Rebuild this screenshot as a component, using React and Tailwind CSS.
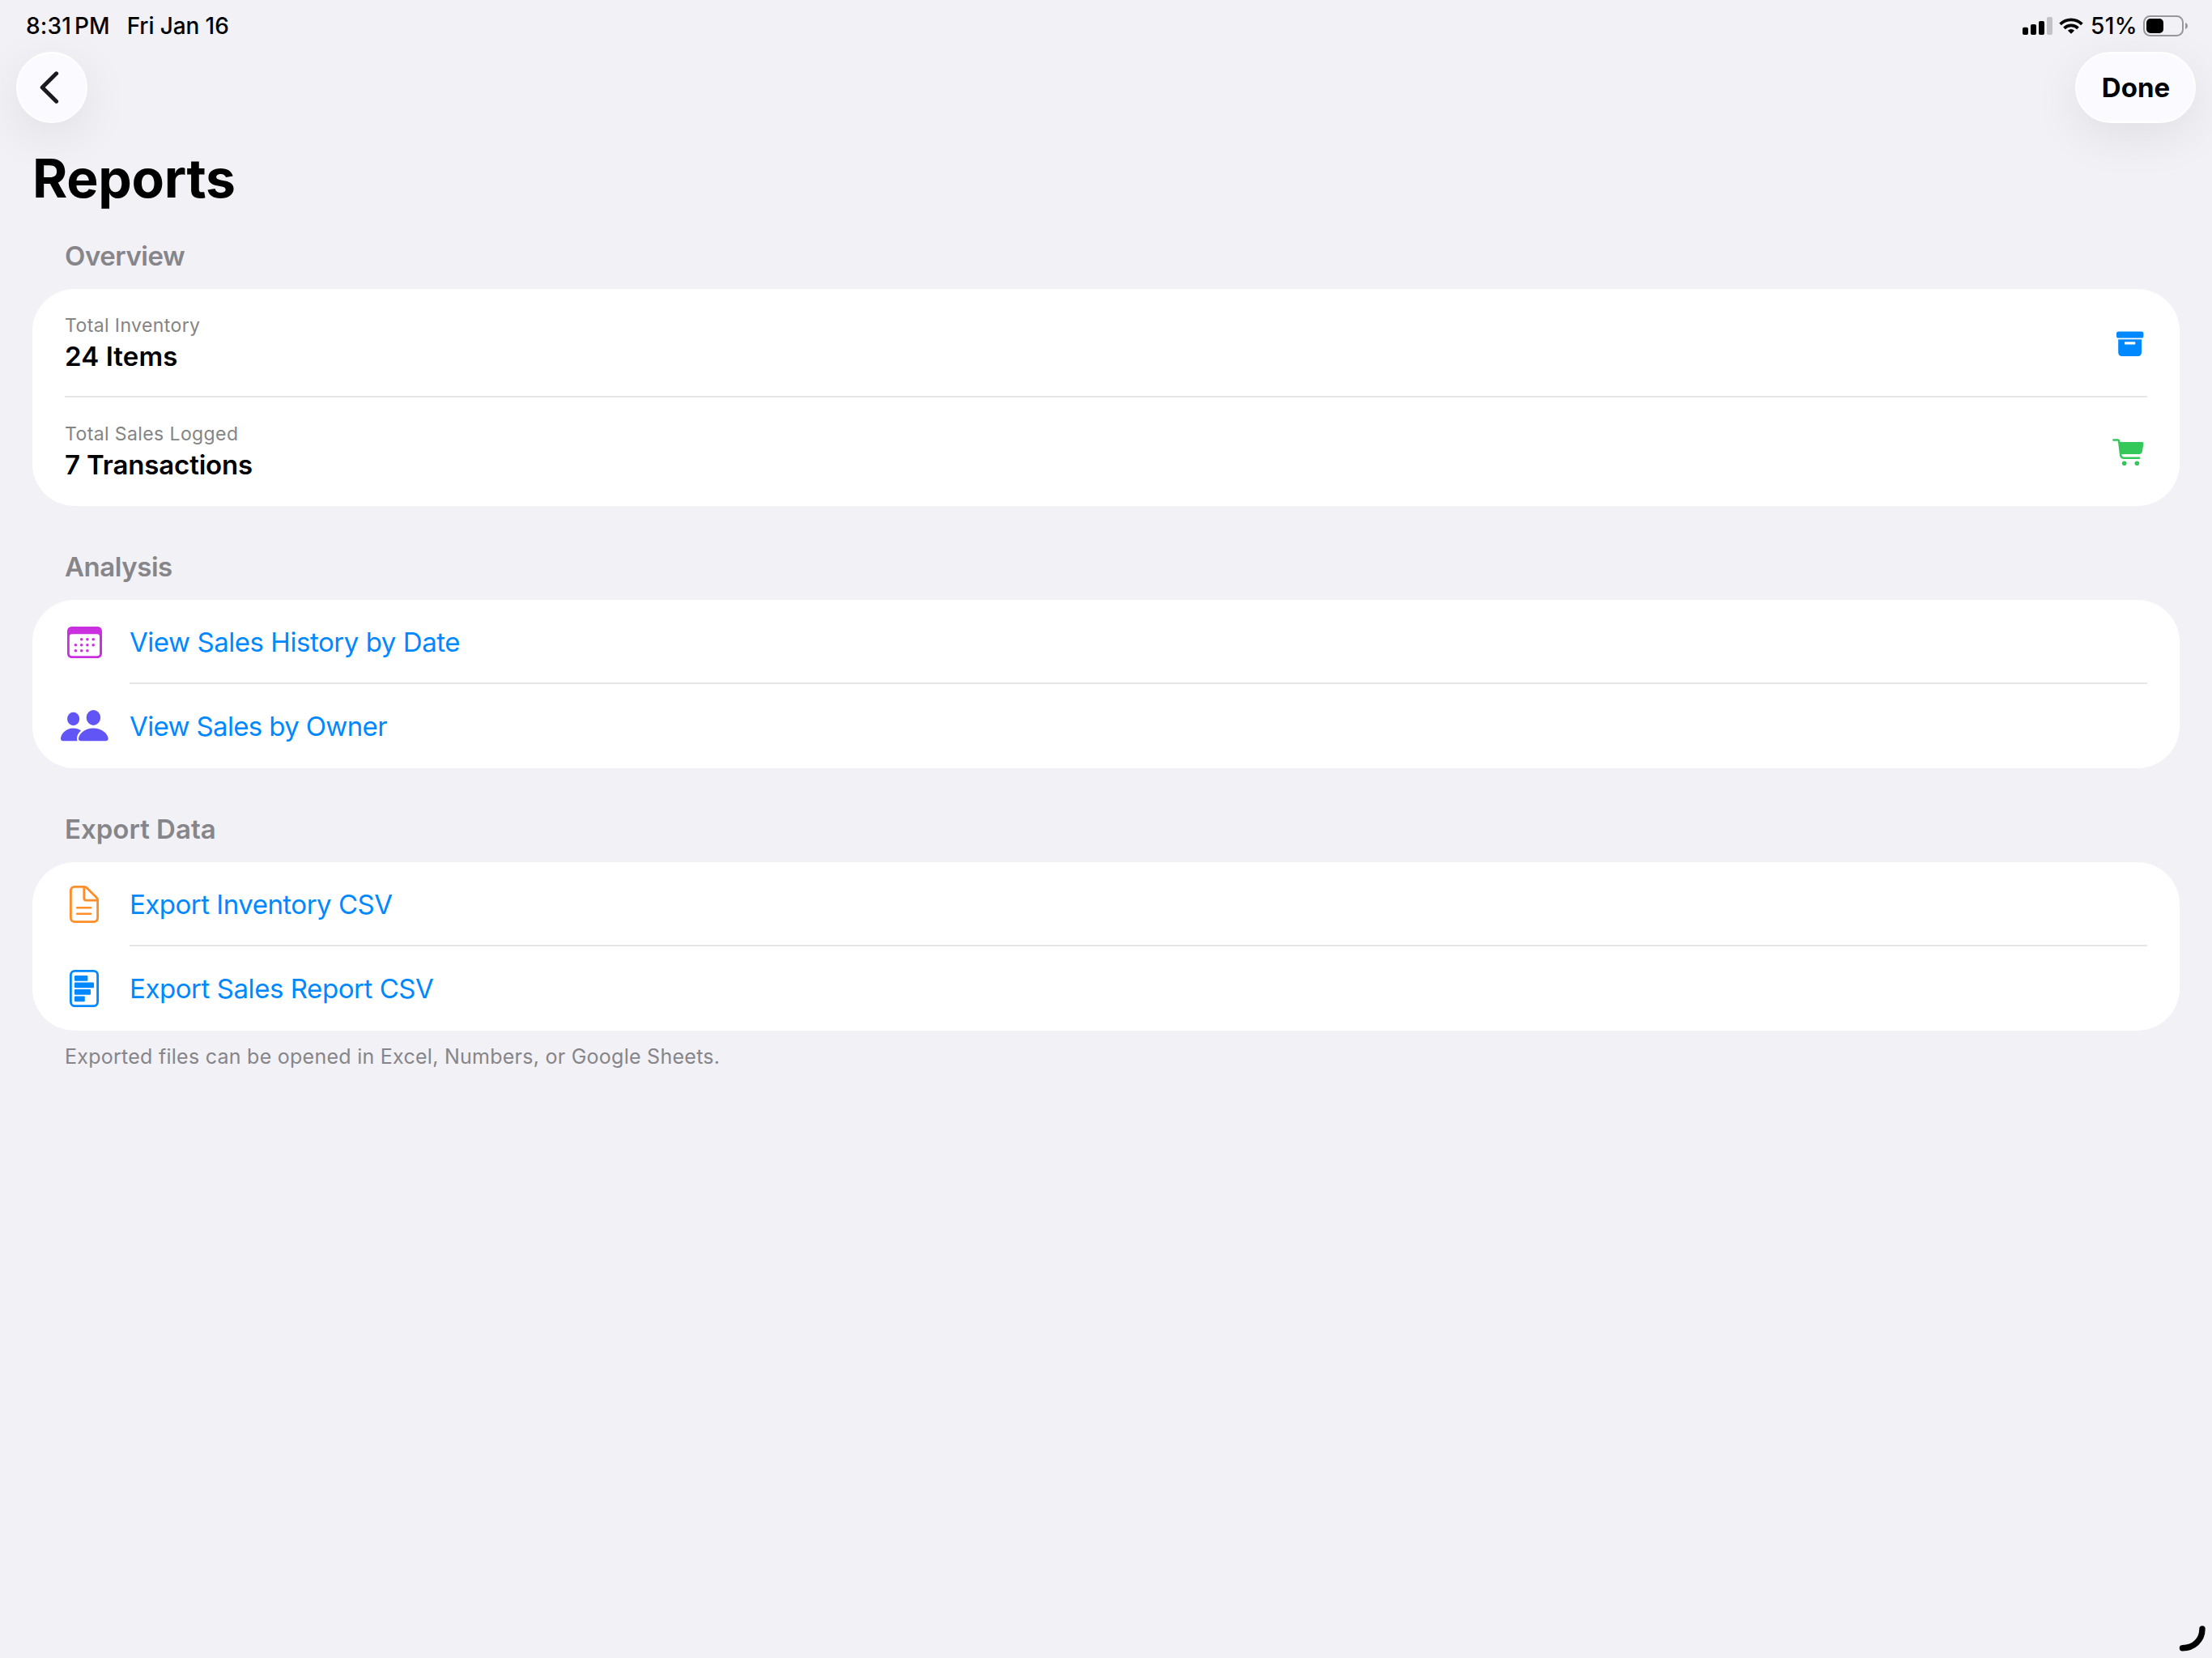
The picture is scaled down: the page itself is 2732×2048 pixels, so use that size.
function StatusBar() {
    return (
        <div className="flex h-16 items-center justify-between pl-8 pr-[29px] text-[28px] font-medium">
            <div className="flex items-center">
                <span className="tracking-[0.2px]">8:31</span>
                <span className="ml-1">PM</span>
                <span className="ml-[21px] tracking-[-0.1px]">Fri Jan 16</span>
            </div>
            <div className="flex items-center">
                <svg width="37" height="22" viewBox="0 0 37 22">
                    <rect x="0" y="12.7" width="7" height="9.3" rx="2" />
                    <rect x="10" y="9" width="7" height="13" rx="2" />
                    <rect x="20" y="5" width="7" height="17" rx="2" />
                    <rect x="30" y="0" width="7" height="22" rx="2" fill="#c3c2c7" />
                </svg>
                <svg width="30" height="20" viewBox="0 0 30 20" className="ml-2" fill="none" stroke="#000" strokeWidth="3.7">
                    <path d="M1.6 7.9A19 19 0 0 1 28.4 7.9" />
                    <path d="M6.5 12.9A12 12 0 0 1 23.5 12.9" />
                    <path d="M15 19.8L10.9 15.8A5.8 5.8 0 0 1 19.1 15.8Z" fill="#000" stroke="none" />
                </svg>
                <span className="ml-[9px] tracking-[0.4px]">51%</span>
                <svg width="56" height="26" viewBox="0 0 56 26" className="ml-[7px]">
                    <rect x="1" y="1" width="48" height="24" rx="7.5" fill="none" stroke="#98979b" strokeWidth="2" />
                    <rect x="4" y="4" width="21" height="18" rx="5" />
                    <path d="M52 9C54 9.7 55 11.2 55 13S54 16.3 52 17Z" fill="#98979b" />
                </svg>
            </div>
        </div>
    );
}

function ArchiveIcon() {
    return (
        <svg width="34" height="32" viewBox="0 0 34 32" fill="#0088ff" className="mt-0.5">
            <rect x="0" y="0.5" width="33.4" height="8" rx="2.6" />
            <path
                fillRule="evenodd"
                d="M2.2 10.3H31V26.3C31 29.3 29.3 31 26.3 31H6.9C3.9 31 2.2 29.3 2.2 26.3ZM11 13.3C10.4 13.3 10 13.7 10 14.3V15.5C10 16.1 10.4 16.5 11 16.5H22.3C22.9 16.5 23.3 16.1 23.3 15.5V14.3C23.3 13.7 22.9 13.3 22.3 13.3Z"
            />
        </svg>
    );
}

function CartIcon() {
    return (
        <svg width="40" height="36" viewBox="0 0 40 36" fill="#34c759" className="mt-0.5">
            <path d="M9 5H37.8C39 5 39.6 5.8 39.4 7L37.9 16.6C37.5 18.9 36.3 20 34.1 20H11Z" />
            <path
                d="M2.3 2.4H7.6C8.5 2.4 9 2.8 9.1 3.7L11.2 21.2C11.5 23.6 12.5 24.7 14.8 24.7H34"
                fill="none"
                stroke="#34c759"
                strokeWidth="2.5"
                strokeLinecap="round"
            />
            <circle cx="15.7" cy="31.3" r="2.8" />
            <circle cx="31.3" cy="31.3" r="2.8" />
        </svg>
    );
}

function CalendarIcon() {
    return (
        <svg width="43" height="39" viewBox="0 0 43 39" fill="#cb30e0" className="shrink-0">
            <path
                fillRule="evenodd"
                d="M6 0H37C40.8 0 43 2.2 43 6V33C43 36.8 40.8 39 37 39H6C2.2 39 0 36.8 0 33V6C0 2.2 2.2 0 6 0ZM6 9.3C3.9 9.3 2.8 10.4 2.8 12.5V33C2.8 35.1 3.9 36.2 6 36.2H36.8C38.9 36.2 40 35.1 40 33V12.5C40 10.4 38.9 9.3 36.8 9.3Z"
            />
            <circle cx="17.7" cy="15.7" r="1.8" />
            <circle cx="24.9" cy="15.7" r="1.8" />
            <circle cx="32.2" cy="15.7" r="1.8" />
            <circle cx="10.4" cy="22.8" r="1.8" />
            <circle cx="17.7" cy="22.8" r="1.8" />
            <circle cx="24.9" cy="22.8" r="1.8" />
            <circle cx="32.2" cy="22.8" r="1.8" />
            <circle cx="10.4" cy="29.8" r="1.8" />
            <circle cx="17.7" cy="29.8" r="1.8" />
            <circle cx="24.9" cy="29.8" r="1.8" />
        </svg>
    );
}

function PeopleIcon() {
    return (
        <svg width="59" height="40" viewBox="0 0 59 40" fill="#6155f5" className="mb-0.5 shrink-0">
            <ellipse cx="15.6" cy="12" rx="7.6" ry="8.2" />
            <ellipse cx="40.4" cy="10.4" rx="8.7" ry="9.5" />
            <path d="M3 39.2C1 39.2 0 38.2 0 36.3C0 31.3 6 23.4 15.5 23.4C19.3 23.4 22.6 24.6 25 26.6C21.8 29.2 20 33 20 36.2C20 37.4 20.2 38.4 20.7 39.2Z" />
            <path d="M25 39.2C23.1 39.2 22 38.3 22 36.5C22 31 29.2 23.4 40.3 23.4S58.6 31 58.6 36.5C58.6 38.3 57.5 39.2 55.6 39.2Z" />
        </svg>
    );
}

function DocumentIcon() {
    return (
        <svg width="36" height="46" viewBox="0 0 36 46" fill="none" stroke="#ff8d28" strokeWidth="2.8" strokeLinecap="round" className="shrink-0">
            <path
                d="M6.3 1.4H18C19.4 1.4 20.2 1.7 21.2 2.7L33.1 14.6C34.2 15.7 34.6 16.6 34.6 18.2V39.5C34.6 42.9 33 44.6 29.6 44.6H6.3C3 44.6 1.4 42.9 1.4 39.5V6.5C1.4 3.1 3 1.4 6.3 1.4Z"
            />
            <path d="M17.8 1.8V15.6C17.8 17.3 18.6 18.1 20.3 18.1H34" />
            <path d="M9.2 27.3H26" strokeWidth="2.4" />
            <path d="M9.2 34.7H26" strokeWidth="2.4" />
        </svg>
    );
}

function ReportIcon() {
    return (
        <svg width="36" height="46" viewBox="0 0 36 46" fill="#0088ff" className="shrink-0">
            <rect x="1.4" y="1.4" width="33.2" height="43.2" rx="5" fill="none" stroke="#0088ff" strokeWidth="2.8" />
            <rect x="6" y="7" width="16.4" height="6.8" rx="1" />
            <rect x="6" y="15.4" width="24" height="6.8" rx="1" />
            <rect x="6" y="24" width="20" height="6.8" rx="1" />
            <rect x="6" y="32.4" width="12.8" height="6.8" rx="1" />
        </svg>
    );
}

function Section({ title, tracking, children }) {
    return (
        <section>
            <h2 className={`flex h-[82px] items-center pt-0.5 pl-10 text-[33px] font-semibold text-[#868589] ${tracking}`}>
                {title}
            </h2>
            <div className="rounded-[52px] bg-white">{children}</div>
        </section>
    );
}

function StatRow({ label, labelTracking, value, valueTracking, icon }) {
    return (
        <div className="flex h-[134px] items-center justify-between pl-10 pr-11">
            <div>
                <p className={`text-[23px] leading-8 text-[#848484] ${labelTracking}`}>{label}</p>
                <p className={`text-[33px] leading-[45px] font-semibold ${valueTracking}`}>{value}</p>
            </div>
            {icon}
        </div>
    );
}

function LinkRow({ icon, label, tracking }) {
    return (
        <div className="flex h-[104px] items-center gap-8 px-10">
            <div className="flex w-12 justify-center">{icon}</div>
            <span className={`pt-0.5 text-[33px] text-[#0088ff] ${tracking}`}>{label}</span>
        </div>
    );
}

export default function App() {
    return (
        <div className="relative h-screen overflow-hidden bg-[#f2f1f6] font-['Inter',sans-serif] text-black">
            <StatusBar />

            {/* Navigation buttons */}
            <div className="flex items-center justify-between px-5">
                <button className="flex size-[88px] items-center justify-center rounded-full border-2 border-white bg-[#fbfaff] shadow-[0_16px_60px_rgba(0,0,0,0.08)]">
                    <svg width="24" height="40" viewBox="0 0 24 40" className="mr-[7px]" fill="none" stroke="#1b1a1f" strokeWidth="5" strokeLinecap="round" strokeLinejoin="round">
                        <path d="M20.6 2.8L3.2 20L20.6 37.2" />
                    </svg>
                </button>
                <button className="flex h-[88px] w-[149px] items-center justify-center rounded-full border-2 border-white bg-[#fbfaff] pt-0.5 pl-px text-[33px] font-bold shadow-[0_16px_60px_rgba(0,0,0,0.08)]">
                    Done
                </button>
            </div>

            <main className="px-10">
                <h1 className="mt-[13px] flex h-[110px] items-center text-[66px] font-bold tracking-[-0.3px]">Reports</h1>

                <div className="flex flex-col gap-[34px]">
                    <Section title="Overview" tracking="tracking-[-0.45px]">
                        <StatRow
                            label="Total Inventory"
                            labelTracking="tracking-[0.4px]"
                            value="24 Items"
                            valueTracking="tracking-[0.1px]"
                            icon={<ArchiveIcon />}
                        />
                        <div className="mx-10 -mt-0.5 h-0.5 bg-[#e6e6e6]" />
                        <StatRow
                            label="Total Sales Logged"
                            labelTracking="tracking-[0.4px]"
                            value="7 Transactions"
                            valueTracking="tracking-[-0.15px]"
                            icon={<CartIcon />}
                        />
                    </Section>

                    <Section title="Analysis" tracking="tracking-[-0.45px]">
                        <LinkRow icon={<CalendarIcon />} label="View Sales History by Date" tracking="tracking-[-0.45px]" />
                        <div className="-mt-0.5 mr-10 ml-30 h-0.5 bg-[#e6e6e6]" />
                        <LinkRow icon={<PeopleIcon />} label="View Sales by Owner" tracking="tracking-[-0.64px]" />
                    </Section>

                    <Section title="Export Data" tracking="tracking-normal">
                        <LinkRow icon={<DocumentIcon />} label="Export Inventory CSV" tracking="tracking-[-0.5px]" />
                        <div className="-mt-0.5 mr-10 ml-30 h-0.5 bg-[#e6e6e6]" />
                        <LinkRow icon={<ReportIcon />} label="Export Sales Report CSV" tracking="tracking-[-0.44px]" />
                    </Section>
                </div>

                <p className="flex h-16 items-center pt-0.5 pl-10 text-[25px] tracking-[0.26px] text-[#868589]">
                    Exported files can be opened in Excel, Numbers, or Google Sheets.
                </p>
            </main>

            {/* Pencil corner handle */}
            <svg width="40" height="40" viewBox="0 0 40 40" className="absolute right-2 bottom-2" fill="none" stroke="#000" strokeWidth="7.4" strokeLinecap="round">
                <path d="M11.5 35.7C26 35.7 36 25.5 36 12" />
            </svg>
        </div>
    );
}
